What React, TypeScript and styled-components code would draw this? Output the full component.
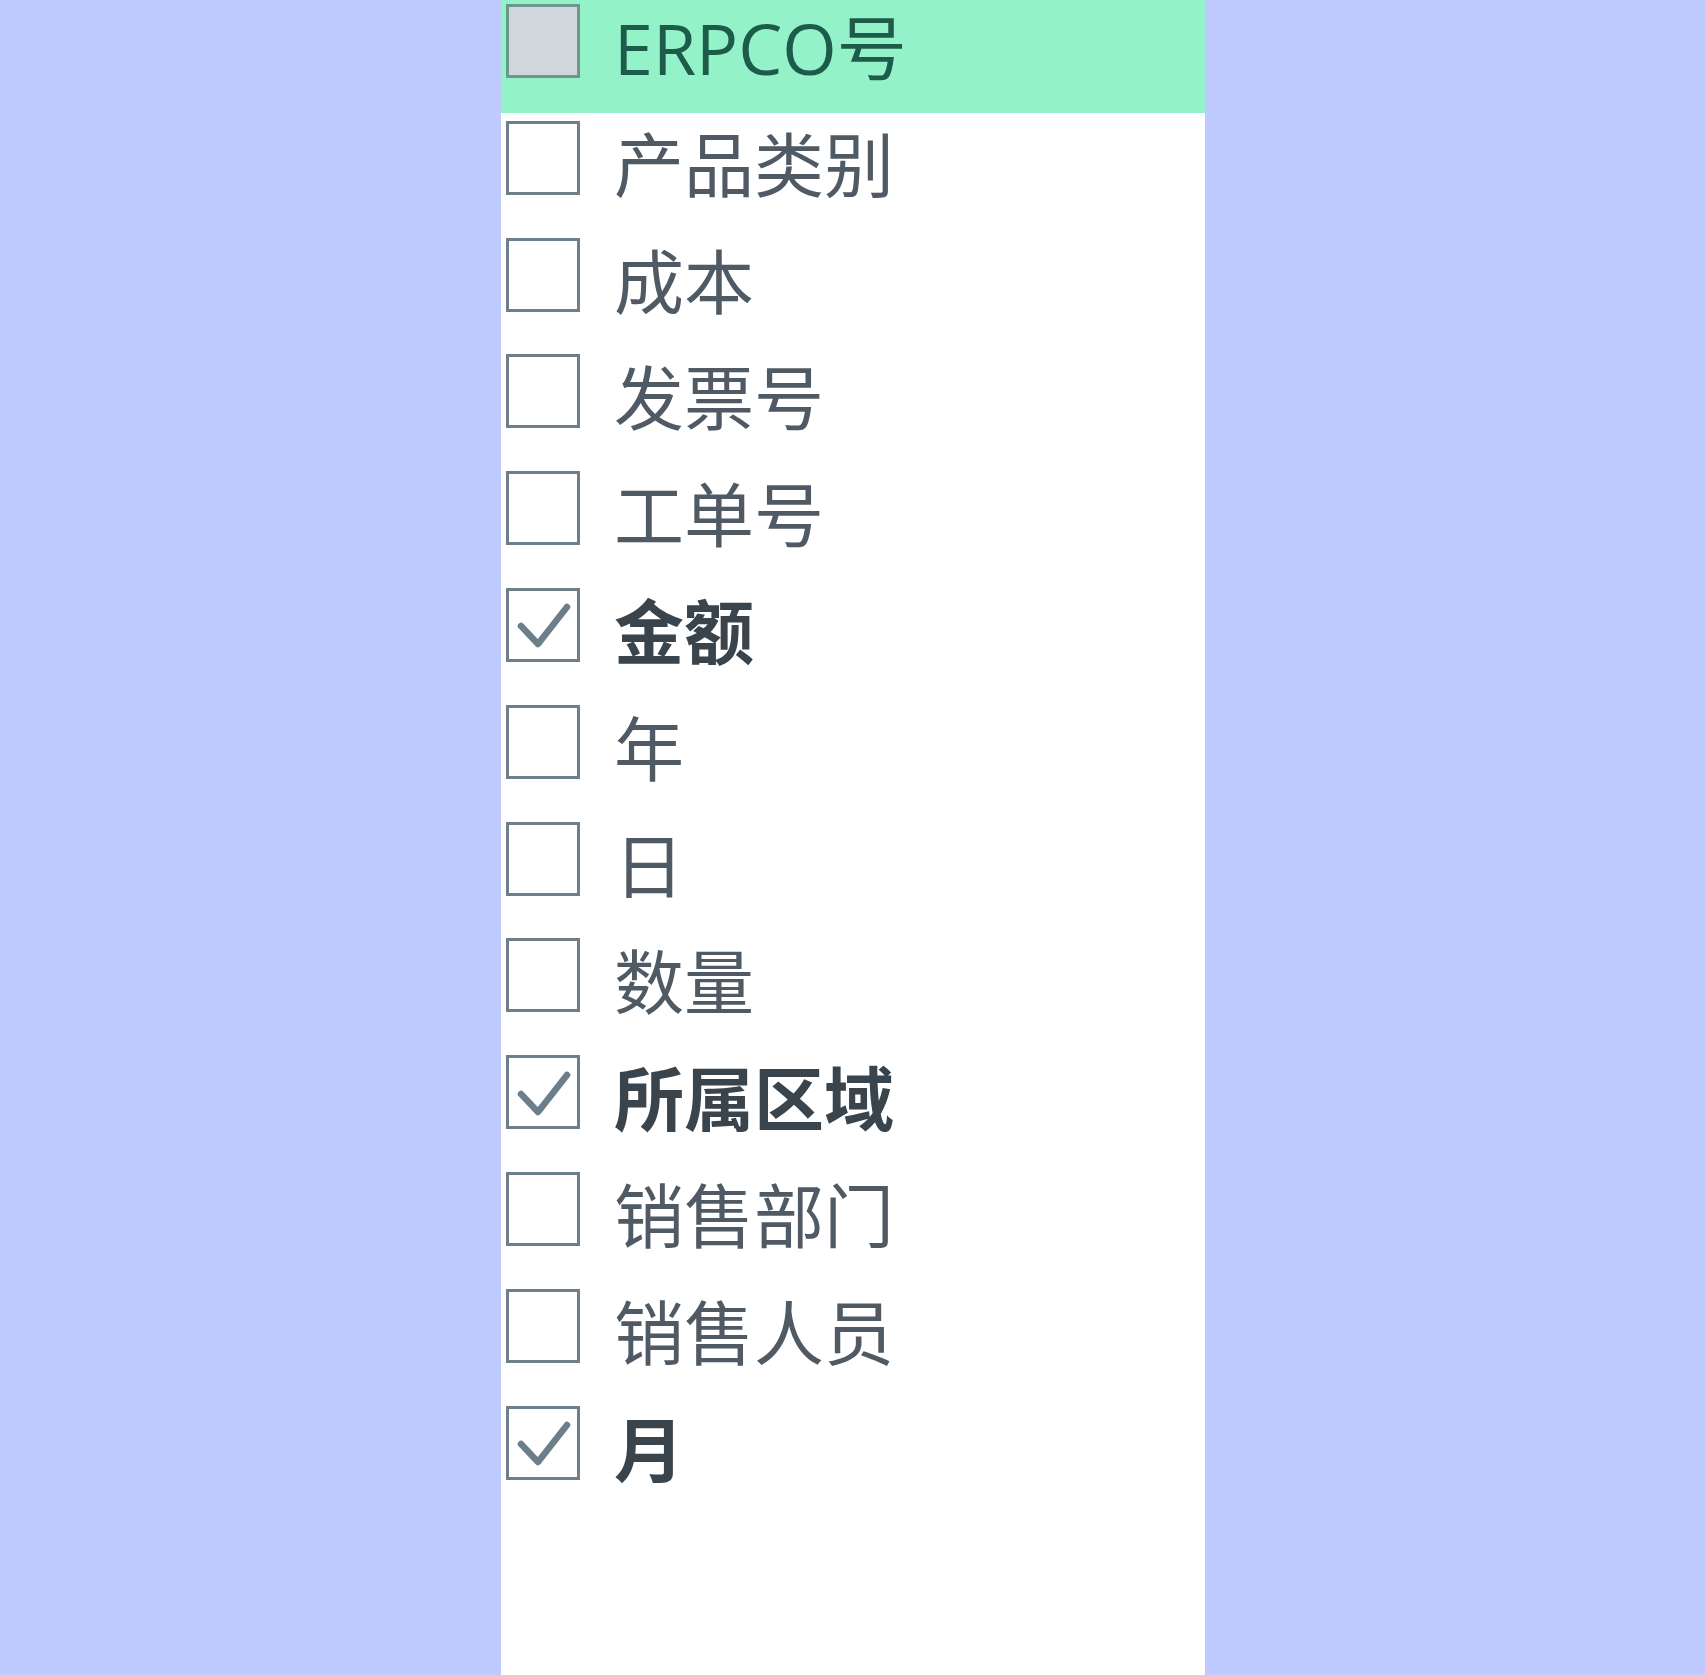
import React from "react";
import styled, { createGlobalStyle } from "styled-components";

const Global = createGlobalStyle`
  html, body { margin: 0; padding: 0; height: 100%; }
  body { background: #bfcbfe; font-family: "Open Sans", "Noto Sans CJK SC", sans-serif; }
  #root { height: 100%; }
`;

const Page = styled.div`
  display: grid;
  grid-template-columns: 501px 704px 1fr;
  min-height: 1675px;
  background: #bfcbfe;
`;

const Panel = styled.div`
  grid-column: 2;
  background: #ffffff;
  display: flex;
  flex-direction: column;
  gap: 3.8px;
`;

const Row = styled.div<{ $active?: boolean }>`
  display: flex;
  align-items: flex-start;
  height: 113px;
  box-sizing: border-box;
  padding: 4px 0 0 5px;
  gap: 34px;
  background: ${(p) => (p.$active ? "#94f2c8" : "transparent")};
`;

const Box = styled.div<{ $active?: boolean }>`
  width: 74px;
  height: 74px;
  box-sizing: border-box;
  border: 3.5px solid ${(p) => (p.$active ? "#6c988c" : "#6f7f89")};
  background: ${(p) => (p.$active ? "#d2d6dd" : "#ffffff")};
  display: flex;
  align-items: center;
  justify-content: center;
  flex: none;
`;

const Label = styled.span<{ $bold?: boolean; $active?: boolean }>`
  font-family: "Open Sans", "Noto Sans CJK SC", sans-serif;
  font-size: 70px;
  line-height: 88px;
  margin-top: 0;
  font-weight: ${(p) => (p.$bold ? 700 : 400)};
  color: ${(p) => (p.$active ? "#1d5c4b" : p.$bold ? "#3a444c" : "#4f5a64")};
  white-space: nowrap;
`;

const Check = () => (
  <svg width="67" height="67" viewBox="0 0 67 67">
    <path
      d="M11 35 L28 53 L57 16"
      fill="none"
      stroke="#6b7e8a"
      strokeWidth="6.5"
      strokeLinecap="round"
      strokeLinejoin="round"
    />
  </svg>
);

const items: { label: string; checked?: boolean }[] = [
  { label: "ERPCO号" },
  { label: "产品类别" },
  { label: "成本" },
  { label: "发票号" },
  { label: "工单号" },
  { label: "金额", checked: true },
  { label: "年" },
  { label: "日" },
  { label: "数量" },
  { label: "所属区域", checked: true },
  { label: "销售部门" },
  { label: "销售人员" },
  { label: "月", checked: true },
];

export default function App() {
  return (
    <>
      <Global />
      <Page>
        <Panel>
          {items.map((it, i) => (
            <Row key={it.label} $active={i === 0}>
              <Box $active={i === 0}>{it.checked && <Check />}</Box>
              <Label $bold={it.checked} $active={i === 0}>
                {it.label}
              </Label>
            </Row>
          ))}
        </Panel>
      </Page>
    </>
  );
}
